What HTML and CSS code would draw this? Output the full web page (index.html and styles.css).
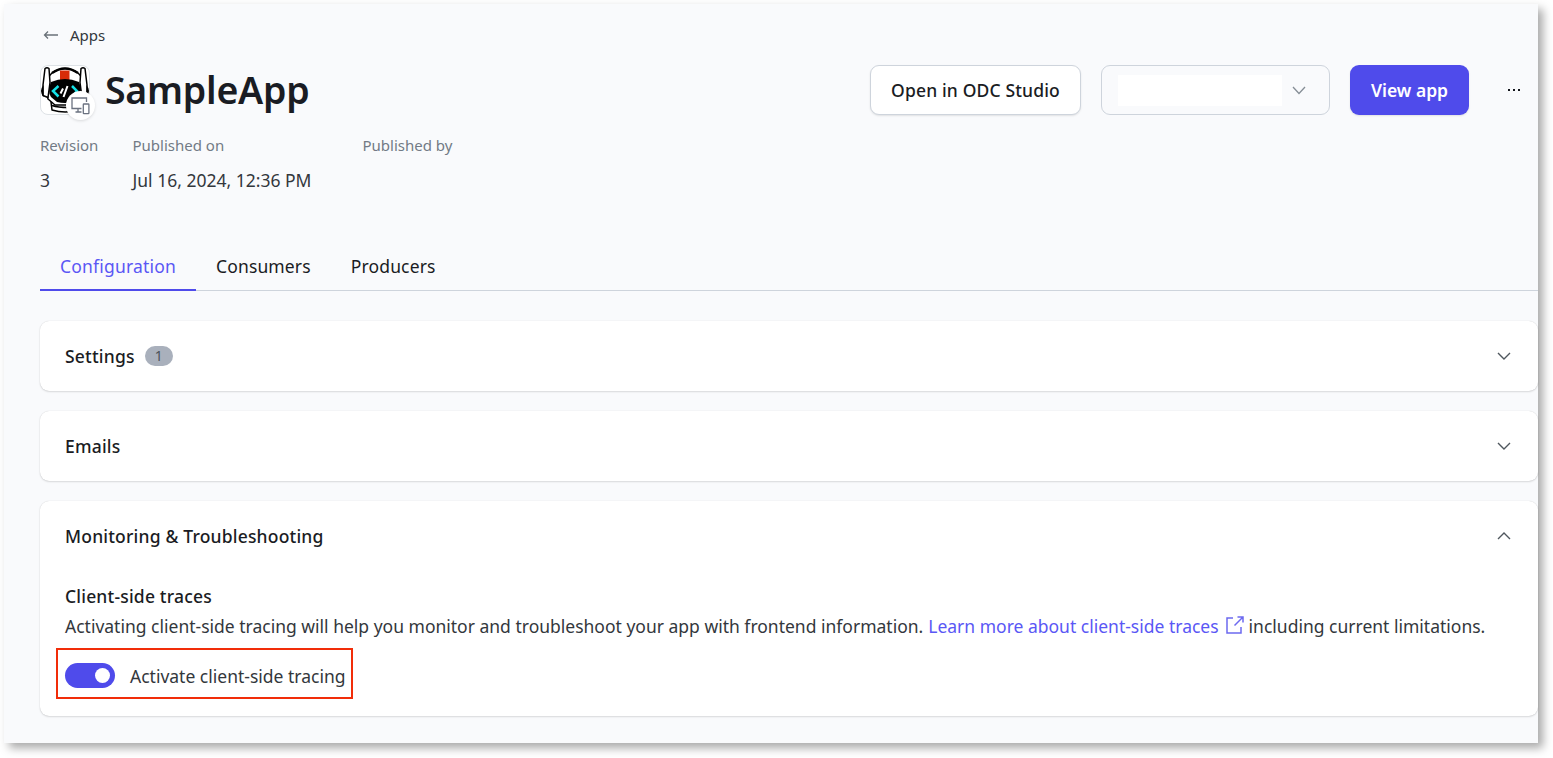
FILE: index.html
```html
<!DOCTYPE html>
<html lang="en">
<head>
<meta charset="utf-8">
<title>SampleApp</title>
<link rel="stylesheet" href="styles.css">
</head>
<body>
<main class="panel">
  <a class="back"><svg class="back-icon" width="16" height="10" viewBox="0 0 16 10"><path d="M15 5H1.500M5 1.500L1.500 5l3.500 3.500"/></svg><span>Apps</span></a>
  <header class="header">
    <div class="app-icon">
      <svg width="50" height="50" viewBox="0 0 50 50">
        <rect x=".5" y=".5" width="49" height="49" rx="7.5" fill="#fff" stroke="#dee2e6"/>
        <g stroke="#000" stroke-width="1.500" fill="#fff" stroke-linejoin="round">
          <path d="M11 37l1 8q13 4 27 0l1-8z"/>
          <path d="M8 34C5 24 6 13 12 8q13-9 26 0c6 5 7 16 4 26l-7 6H15z"/>
          <path d="M5 3.500q2-1.500 4 0l1 14-2 15-5-2V20z"/>
          <path d="M45 3.500q-2-1.500-4 0l-1 14 2 15 5-2V20z"/>
        </g>
        <path d="M3.500 20q-5 6 0 12zM46.500 20q5 6 0 12z"/>
        <path d="M12 8q13-9 26 0" fill="none" stroke="#000" stroke-width="2.400"/>
        <path d="M20 5.500h9.500V15H20z" fill="#d82b08"/>
        <path d="M11 17q14-6 28 0 4 9 0 15l-6 5q-8 2-16 0l-6-5q-4-6 0-15z"/>
        <path d="M18.500 21L13 26l5.500 5.500M32 21l5 5-5 6" fill="none" stroke="#16e0e5" stroke-width="2.500"/>
        <path d="M20.500 28.500l2.500-5M23.500 32l4-11" stroke="#fff" stroke-width="2"/>
        <path d="M12 40.500q6 2 16 2" fill="none" stroke="#000" stroke-width="1.500"/>
      </svg>
      <span class="device-badge"><svg width="19" height="18" viewBox="0 0 19 18" fill="none" stroke="#6b7280" stroke-width="1.300"><path d="M10.500 11.500H1V1h14.500v4M7 11.500v3M4.500 15h6"/><rect x="12.300" y="7" width="5.600" height="9.600" rx=".6"/></svg></span>
    </div>
    <h1 class="title">SampleApp</h1>
    <div class="actions">
      <button class="btn btn-open"><span>Open in ODC Studio</span></button>
      <div class="select"><span class="select-value"></span><svg width="14" height="9" viewBox="0 0 14 9"><path d="M1 1l6 6.500L13 1"/></svg></div>
      <button class="btn btn-view"><span>View app</span></button>
      <svg class="more" width="14" height="4" viewBox="0 0 14 4"><path d="M1 1h2v2H1zM6 1h2v2H6zM11 1h2v2h-2z"/></svg>
    </div>
  </header>
  <dl class="meta">
    <div><dt>Revision</dt><dd>3</dd></div>
    <div><dt>Published on</dt><dd class="date">Jul 16, 2024, 12:36 PM</dd></div>
    <div><dt>Published by</dt></div>
  </dl>
  <nav class="tabs"><a class="tab active">Configuration</a><a class="tab">Consumers</a><a class="tab">Producers</a></nav>
  <section class="card"><div class="card-head"><h2>Settings</h2><span class="count">1</span><svg class="chevron" width="14" height="9" viewBox="0 0 14 9"><path d="M1 1l6 6 6-6"/></svg></div></section>
  <section class="card"><div class="card-head"><h2>Emails</h2><svg class="chevron" width="14" height="9" viewBox="0 0 14 9"><path d="M1 1l6 6 6-6"/></svg></div></section>
  <section class="card card-open">
    <div class="card-head"><h2>Monitoring &amp; Troubleshooting</h2><svg class="chevron" width="14" height="9" viewBox="0 0 14 9"><path d="M1 7l6-6 6 6"/></svg></div>
    <h3 class="subhead">Client-side traces</h3>
    <p class="desc"><span>Activating client-side tracing will help you monitor and troubleshoot your app with frontend information.</span> <a class="link">Learn more about client-side traces</a><svg class="external" width="18" height="18" viewBox="0 0 18 18"><path d="M7 2H1v15h14v-6M8.500 9.500l8-8M11.500 1H17v5.500"/></svg><span>including current limitations.</span></p>
    <div class="toggle-row"><span class="toggle"><span class="knob"></span></span><span>Activate client-side tracing</span></div>
  </section>
</main>
</body>
</html>
```
FILE: styles.css
```css
* { box-sizing: border-box; }
body { margin: 0; padding: 4px 0 0 4px; height: 758px; background: #fff; font: 17.5px/30px "Noto Sans", sans-serif; color: #33373c; overflow: hidden; }
h1, h2, h3, p, dl, dd { margin: 0; }
svg { display: block; flex: none; }
.panel { width: 1534px; height: 739px; padding: 16px 0 0 36px; background: #f9fafc; box-shadow: 5px 5px 9px rgba(0,0,0,.34); display: flex; flex-direction: column; }
.back { display: flex; align-items: center; height: 30px; font-size: 15px; padding-left: 3px; gap: 11px; }
.back-icon { fill: none; stroke: #6a7178; stroke-width: 1.3; }
.header { display: flex; height: 50px; margin-top: 15px; align-items: center; }
.app-icon { position: relative; width: 50px; height: 50px; }
.device-badge { position: absolute; left: 26px; top: 26px; width: 29px; height: 29px; border-radius: 50%; background: #fff; box-shadow: 0 1px 3px rgba(0,0,0,.13); display: grid; place-items: center; }
.title { font-size: 37.5px; line-height: 50px; font-weight: 600; letter-spacing: -.25px; margin-left: 15px; color: #1a1c23; }
.actions { display: flex; align-items: center; margin-left: auto; padding-right: 17px; }
.btn { font: 500 17.5px/24px "Noto Sans", sans-serif; height: 50px; border-radius: 9px; padding: 0; white-space: nowrap; }
.btn-open { width: 211px; background: #fff; border: 1px solid #ced4dc; color: #1a1c23; letter-spacing: .15px; box-shadow: 0 1px 2px rgba(0,0,0,.1); }
.select { width: 229px; height: 50px; margin: 0 20px; border: 1px solid #ced4dc; border-radius: 9px; display: flex; align-items: center; padding-left: 16px; gap: 10px; }
.select svg { fill: none; stroke: #868e96; stroke-width: 1.3; }
.select-value { width: 164px; height: 31px; background: #fff; }
.btn-view { width: 119px; background: #4f4beb; color: #fff; border: 0; font-weight: 600; box-shadow: 0 1px 2px rgba(0,0,0,.1); }
.more { margin-left: 38px; fill: #15171d; }
.meta { display: grid; grid-template-columns: 92.5px 230px 200px; margin-top: 15px; height: 110px; flex: none; }
.meta dt { font-size: 15px; line-height: 30px; color: #727a85; }
.meta dd { margin-top: 5px; }
.tabs { display: flex; flex: none; height: 51px; border-bottom: 1px solid #ced4dc; margin-bottom: 30px; }
.tab { height: 51px; padding: 11px 20px 0; color: #1a1c23; letter-spacing: .14px; }
.tab.active { width: 156px; letter-spacing: .2px; color: #5a57f5; border-bottom: 2px solid #4f4beb; }
.card { height: 70px; margin-bottom: 20px; padding: 0 25px; border-radius: 9px; background: #fff; box-shadow: 0 0 1px rgba(0,0,0,.18), 0 1px 2px rgba(0,0,0,.12); flex: none; }
.card-open { height: 215px; }
.card-head { display: flex; align-items: center; height: 70px; }
h2, h3 { font-size: 17.5px; line-height: 30px; font-weight: 500; letter-spacing: .19px; color: #1a1c23; }
.count { width: 28px; height: 20px; line-height: 20px; border-radius: 10px; background: #a9b0bc; color: #4b5158; font-size: 14px; text-align: center; margin-left: 10px; }
.chevron { margin-left: auto; margin-right: 2px; fill: none; stroke: #4f575e; stroke-width: 1.4; }
.subhead { margin-top: 10px; }
.desc { display: flex; align-items: center; white-space: nowrap; height: 30px; }
.link { color: #5a57f5; margin-left: 5px; }
.external { margin: 0 5px 2px 7px; fill: none; stroke: #6c69f0; stroke-width: 1.5; }
.toggle-row { display: flex; align-items: center; gap: 15px; width: 297px; height: 51px; border: 2px solid #f12d09; margin: 7px 0 0 -9px; padding: 4px 0 0 7px; white-space: nowrap; }
.toggle { width: 50px; height: 25px; border-radius: 13px; background: #4f4beb; padding: 5px; display: flex; justify-content: flex-end; margin-bottom: 1px; flex: none; }
.knob { width: 15px; height: 15px; border-radius: 50%; background: #fff; }
```
